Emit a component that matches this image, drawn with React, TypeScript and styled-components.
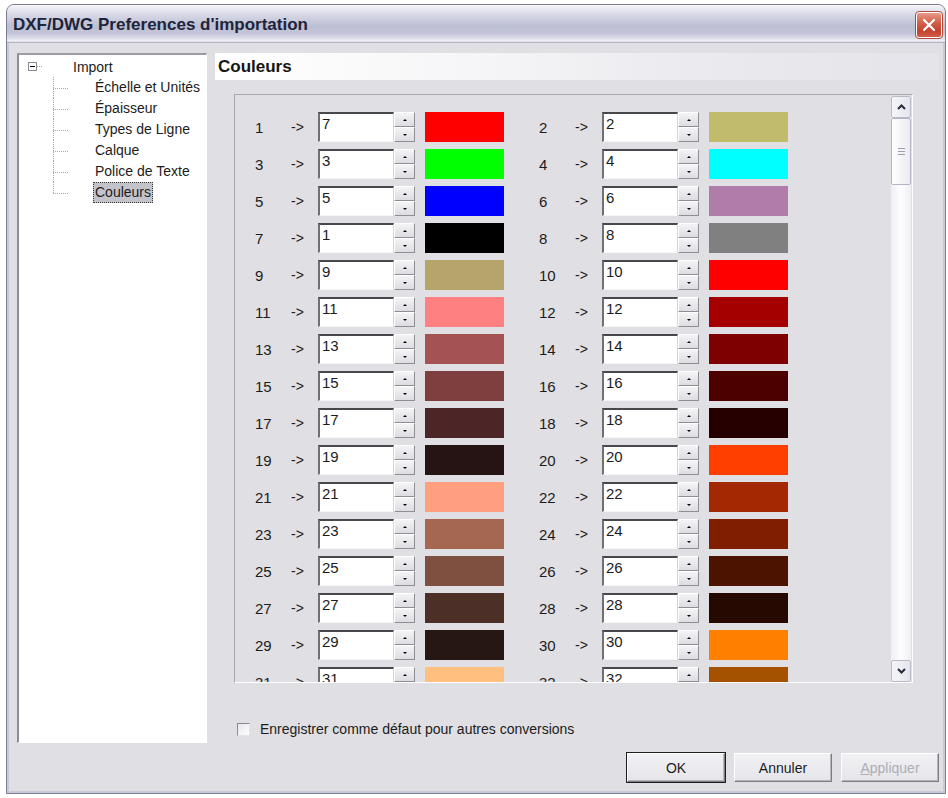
import React from "react";
import styled, { createGlobalStyle } from "styled-components";

const FONT = `"Liberation Sans", Arial, sans-serif`;

const GlobalStyle = createGlobalStyle`
  html, body {
    margin: 0;
    padding: 0;
    background: #ffffff;
  }
  body {
    font-family: ${FONT};
    color: #1c1c1c;
  }
`;

const swatches = [
  "#ff0000", "#c0bc6c", "#00ff00", "#00ffff", "#0000ff", "#b07daa", "#000000", "#808080",
  "#b6a56b", "#ff0000", "#ff8080", "#a50000", "#a55252", "#7f0000", "#7f3f3f", "#4c0000",
  "#4c2626", "#260000", "#261313", "#ff3f00", "#ff9f7f", "#a52900", "#a56752", "#7f1f00",
  "#7f4f3f", "#4c1300", "#4c2f26", "#260900", "#261713", "#ff7f00", "#ffbf7f", "#a55200",
];

const treeItems = ["Échelle et Unités", "Épaisseur", "Types de Ligne", "Calque", "Police de Texte", "Couleurs"];

const mapped = (i: number) => (i === 1 ? 7 : i === 7 ? 1 : i);

const Chevron = ({ down }: { down?: boolean }) => (
  <svg width="9" height="6" viewBox="0 0 9 6">
    <path
      d={down ? "M1 1 L4.5 4.5 L8 1" : "M1 5 L4.5 1.5 L8 5"}
      fill="none"
      stroke="#262a3a"
      strokeWidth="2"
    />
  </svg>
);

const App: React.FC = () => {
  return (
    <Window>
      <GlobalStyle />
      <TitleBar>
        <TitleText>DXF/DWG Preferences d'importation</TitleText>
        <CloseButton>
          <svg width="14" height="14" viewBox="0 0 14 14">
            <path d="M2 2 L12 12 M12 2 L2 12" stroke="#ffffff" strokeWidth="2.2" strokeLinecap="round" />
          </svg>
        </CloseButton>
      </TitleBar>
      <Client>
        <Main>
          <TreePane>
            <RootRow>
              <Expander />
              <RootDots />
              <TreeLabel>Import</TreeLabel>
            </RootRow>
            <Children>
              {treeItems.map((item, i) => (
                <ChildRow key={item}>
                  <Connector $last={i === treeItems.length - 1} />
                  <ChildLabel $selected={item === "Couleurs"}>{item}</ChildLabel>
                </ChildRow>
              ))}
            </Children>
          </TreePane>
          <RightColumn>
            <Header>Couleurs</Header>
            <ColorPanel>
              <Rows>
                {swatches.map((color, idx) => {
                  const n = idx + 1;
                  return (
                    <Entry key={n}>
                      <Index>{n}</Index>
                      <ArrowText>-&gt;</ArrowText>
                      <Field>{mapped(n)}</Field>
                      <Spin>
                        <SpinButton>
                          <Tri />
                        </SpinButton>
                        <SpinButton>
                          <Tri $down />
                        </SpinButton>
                      </Spin>
                      <Swatch style={{ background: color }} />
                    </Entry>
                  );
                })}
              </Rows>
              <ScrollBar>
                <ScrollButton>
                  <Chevron />
                </ScrollButton>
                <Thumb>
                  <Grip />
                  <Grip />
                  <Grip />
                </Thumb>
                <Track />
                <ScrollButton>
                  <Chevron down />
                </ScrollButton>
              </ScrollBar>
            </ColorPanel>
            <CheckRow>
              <CheckBox />
              <span>Enregistrer comme défaut pour autres conversions</span>
            </CheckRow>
          </RightColumn>
        </Main>
        <ButtonRow>
          <Button $default>OK</Button>
          <Button>Annuler</Button>
          <Button disabled>
            <u>A</u>ppliquer
          </Button>
        </ButtonRow>
      </Client>
    </Window>
  );
};

export default App;

const Window = styled.div`
  width: 940px;
  height: 790px;
  margin: 4px 0 0 6px;
  box-sizing: border-box;
  border: 1px solid #7b7e92;
  border-radius: 8px 8px 0 0;
  background: #c9cad8;
  display: flex;
  flex-direction: column;
  overflow: hidden;
`;

const TitleBar = styled.div`
  height: 38px;
  flex-shrink: 0;
  display: flex;
  align-items: center;
  justify-content: space-between;
  padding: 0 3px 0 6px;
  background: linear-gradient(
    #f8f8fb 0%,
    #e6e6ef 12%,
    #cfd0e0 35%,
    #bcbed3 55%,
    #c4c5d8 75%,
    #e2e3ec 90%,
    #f4f4f8 95%,
    #9a9cb0 100%
  );
`;

const TitleText = styled.div`
  font-family: ${FONT};
  font-weight: bold;
  font-size: 17px;
  color: #20243a;
  padding-top: 1px;
`;

const CloseButton = styled.div`
  width: 26px;
  height: 26px;
  box-sizing: border-box;
  border: 1px solid #ffffff;
  outline: 1px solid #b04a3a;
  border-radius: 3px;
  background: linear-gradient(#e69a8a, #d4604c 40%, #c4432f 75%, #d15c48);
  display: flex;
  align-items: center;
  justify-content: center;
  margin-top: 2px;
`;

const Client = styled.div`
  flex: 1;
  margin: 0 2px 2px 2px;
  background: #e0dfe3;
  padding: 10px 4px 0 8px;
  display: flex;
  flex-direction: column;
`;

const Main = styled.div`
  height: 690px;
  display: flex;
  gap: 8px;
`;

const TreePane = styled.div`
  width: 190px;
  flex-shrink: 0;
  box-sizing: border-box;
  background: #ffffff;
  border-top: 2px solid #9d9ca2;
  border-left: 2px solid #8d8c92;
  border-right: 1px solid #ffffff;
  border-bottom: 1px solid #ffffff;
  padding-top: 1px;
  font-size: 14px;
`;

const RootRow = styled.div`
  height: 21px;
  display: flex;
  align-items: center;
  padding-left: 9px;
`;

const Expander = styled.span`
  width: 9px;
  height: 9px;
  box-sizing: border-box;
  border: 1px solid #8a8a90;
  position: relative;
  background: #fff;
  &::after {
    content: "";
    position: absolute;
    left: 1px;
    right: 1px;
    top: 3px;
    border-top: 1px solid #000;
  }
`;

const RootDots = styled.span`
  width: 5px;
  border-top: 1px dotted #a0a0a0;
`;

const TreeLabel = styled.span`
  margin-left: 31px;
`;

const Children = styled.div`
  padding-left: 34px;
`;

const ChildRow = styled.div`
  height: 21px;
  display: flex;
  align-items: center;
`;

const Connector = styled.span<{ $last?: boolean }>`
  position: relative;
  width: 16px;
  align-self: stretch;
  flex-shrink: 0;
  &::before {
    content: "";
    position: absolute;
    left: 0;
    top: 0;
    height: ${(p) => (p.$last ? "50%" : "100%")};
    border-left: 1px dotted #a8a8a8;
  }
  &::after {
    content: "";
    position: absolute;
    left: 0;
    top: 50%;
    width: 15px;
    border-top: 1px dotted #a8a8a8;
  }
`;

const ChildLabel = styled.span<{ $selected?: boolean }>`
  margin-left: 24px;
  padding: 2px 2px 3px;
  white-space: nowrap;
  background: ${(p) => (p.$selected ? "#c3c3cb" : "transparent")};
  outline: ${(p) => (p.$selected ? "1px dotted #3a3a3a" : "none")};
  outline-offset: -1px;
`;

const RightColumn = styled.div`
  flex: 1;
  display: flex;
  flex-direction: column;
`;

const Header = styled.div`
  height: 27px;
  display: flex;
  align-items: center;
  padding-left: 3px;
  font-weight: bold;
  font-size: 17px;
  color: #161616;
  background: linear-gradient(90deg, #ffffff 0%, #f6f6f8 35%, #e9e9ee 70%, #e4e4ea 100%);
`;

const ColorPanel = styled.div`
  display: flex;
  width: 679px;
  height: 589px;
  margin: 14px 0 0 19px;
  box-sizing: border-box;
  border-top: 1px solid #a9a8ae;
  border-left: 1px solid #a9a8ae;
  border-right: 1px solid #ffffff;
  border-bottom: 1px solid #ffffff;
`;

const Rows = styled.div`
  flex: 1;
  overflow: hidden;
  padding: 17px 0 0 20px;
  display: grid;
  grid-template-columns: 249px 249px;
  grid-auto-rows: 30px;
  column-gap: 35px;
  row-gap: 7px;
  align-content: start;
`;

const Entry = styled.div`
  display: flex;
  align-items: center;
  height: 30px;
  font-size: 15px;
`;

const Index = styled.span`
  width: 36px;
  flex-shrink: 0;
`;

const ArrowText = styled.span`
  width: 27px;
  flex-shrink: 0;
  font-size: 14px;
`;

const Field = styled.div`
  width: 76px;
  height: 30px;
  box-sizing: border-box;
  flex-shrink: 0;
  background: #ffffff;
  border-top: 2px solid #48484c;
  border-left: 2px solid #707074;
  border-right: 1px solid #d4d4da;
  border-bottom: 1px solid #f6f6f6;
  padding: 1px 2px 0;
  line-height: 17px;
  font-size: 15px;
`;

const Spin = styled.div`
  width: 21px;
  height: 30px;
  display: flex;
  flex-direction: column;
  flex-shrink: 0;
`;

const SpinButton = styled.div`
  flex: 1;
  box-sizing: border-box;
  border: 1px solid;
  border-color: #ffffff #8e8e94 #8e8e94 #ffffff;
  background: linear-gradient(#f4f4f6, #dcdce2);
  display: flex;
  align-items: center;
  justify-content: center;
`;

const Tri = styled.span<{ $down?: boolean }>`
  width: 0;
  height: 0;
  border-left: 2px solid transparent;
  border-right: 2px solid transparent;
  ${(p) => (p.$down ? "border-top: 2px solid #000;" : "border-bottom: 2px solid #000;")}
`;

const Swatch = styled.div`
  width: 79px;
  height: 30px;
  margin-left: 10px;
  flex-shrink: 0;
`;

const ScrollBar = styled.div`
  width: 20px;
  margin: 1px 1px 0 0;
  display: flex;
  flex-direction: column;
  background: linear-gradient(90deg, #f0f0f4, #fdfdfe 50%, #f0f0f4);
`;

const ScrollButton = styled.div`
  height: 22px;
  box-sizing: border-box;
  border: 1px solid #b9bac8;
  border-radius: 2px;
  background: linear-gradient(90deg, #f6f6f9, #e4e4ec);
  display: flex;
  align-items: center;
  justify-content: center;
`;

const Thumb = styled.div`
  height: 67px;
  box-sizing: border-box;
  border: 1px solid #b4b5c6;
  border-radius: 2px;
  background: linear-gradient(90deg, #ffffff, #ebebf1);
  display: flex;
  flex-direction: column;
  align-items: center;
  justify-content: center;
  gap: 2px;
`;

const Grip = styled.span`
  width: 7px;
  height: 1px;
  background: #9c9cac;
`;

const Track = styled.div`
  flex: 1;
`;

const CheckRow = styled.div`
  margin: 38px 0 0 22px;
  height: 16px;
  display: flex;
  align-items: center;
  gap: 10px;
  font-size: 14px;
`;

const CheckBox = styled.span`
  width: 13px;
  height: 13px;
  box-sizing: border-box;
  border: 1px solid;
  border-color: #8a8a90 #e4e4e8 #e4e4e8 #8a8a90;
  background: linear-gradient(135deg, #e6e6ea, #ffffff);
`;

const ButtonRow = styled.div`
  margin-top: 10px;
  display: flex;
  justify-content: flex-end;
  gap: 9px;
`;

const Button = styled.button<{ $default?: boolean }>`
  width: 98px;
  height: 29px;
  box-sizing: border-box;
  font-family: ${FONT};
  font-size: 14px;
  color: #1c1c1c;
  border: 1px solid;
  border-color: #ffffff #7e7e84 #7e7e84 #ffffff;
  box-shadow: ${(p) =>
    p.$default ? "0 0 0 1px #1e1e1e, inset -1px -1px #b4b4ba" : "inset -1px -1px #b4b4ba"};
  background: linear-gradient(#f2f2f5, #e4e4ea);
  padding: 0;
  &:disabled {
    color: #aeadb4;
  }
`;
